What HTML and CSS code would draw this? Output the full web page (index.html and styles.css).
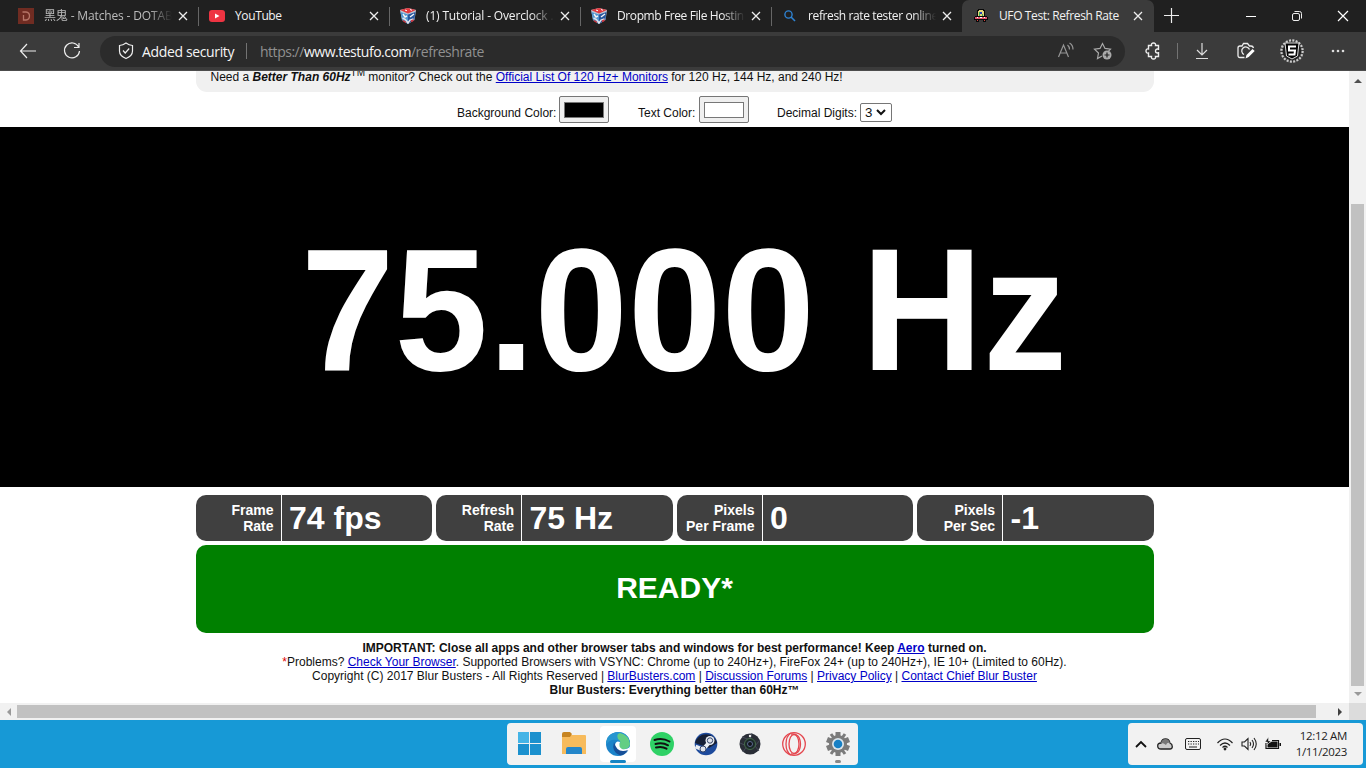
FILE: index.html
```html
<!DOCTYPE html>
<html lang="en">
<head>
<meta charset="utf-8">
<title>UFO Test: Refresh Rate</title>
<link rel="stylesheet" href="styles.css">
</head>
<body>
<svg width="0" height="0" class="defs">
  <symbol id="x" viewBox="0 0 10 10"><path d="M1 1l8 8M9 1L1 9" stroke="#eee" stroke-width="1.3" fill="none"/></symbol>
  <symbol id="cube" viewBox="0 0 16 16"><path d="M0 2L8 0l8 2-1.500 10L8 16l-6-4z" fill="#b9c6d6"/><path d="M0 2L8 0l8 2-8 3.500z" fill="#e23a3f"/><path d="M.5 4L8 6.500V16l-6-4z" fill="#4d94d0"/><path d="M8 6.500L15.500 4l-1.200 8L8 16z" fill="#27579e"/><path d="M3 6l2 3 2-1M10 9l4-3" stroke="#f4f4f6" stroke-width="1.400" fill="none"/><path d="M5 2l2 .8M10 1.500l2 .8" stroke="#fff"/><path d="M2.500 10l3 1.500L8 15l2-3 3.500-1" stroke="#e5e5ea" stroke-width="1.400" fill="none"/><path d="M3 12.500l3 2M11 13.500l2.500-1.500" stroke="#d5363a" stroke-width="1.500" fill="none"/></symbol>
</svg>
<div class="tabs">
  <div class="tab"><svg class="fav" viewBox="0 0 16 16"><path fill="#702c22" d="M0 0h16v16H0z"/><path d="M4.500 4H8q3.500 .5 3.500 4T8 12H5.500V7" stroke="#b77668" stroke-width="1.300" fill="none"/></svg><span class="ttl dim fade">黑鬼 - Matches - DOTAB</span><svg class="close"><use href="#x"/></svg></div>
  <div class="tab"><svg class="fav" viewBox="0 0 16 16"><rect y="2" width="16" height="12" rx="3" fill="#ee3442"/><path d="M6 5.5v5L10.500 8z" fill="#fff"/></svg><span class="ttl">YouTube</span><svg class="close"><use href="#x"/></svg></div>
  <div class="tab"><svg class="fav"><use href="#cube"/></svg><span class="ttl fade t3">(1) Tutorial - Overclock .</span><svg class="close"><use href="#x"/></svg></div>
  <div class="tab"><svg class="fav"><use href="#cube"/></svg><span class="ttl fade t4">Dropmb Free File Hostin</span><svg class="close"><use href="#x"/></svg></div>
  <div class="tab nosep"><svg class="fav" viewBox="0 0 16 16"><circle cx="6.500" cy="6.500" r="3.600" stroke="#2e82d2" stroke-width="1.400" fill="none"/><path d="M9 9l4 4" stroke="#2e82d2" stroke-width="1.600"/></svg><span class="ttl fade t5">refresh rate tester online</span><svg class="close"><use href="#x"/></svg></div>
  <div class="tab active"><svg class="fav" viewBox="0 0 16 16" shape-rendering="crispEdges"><path d="M5 1h6v1h1v6h2v1h1v3h-2v2h-3v-2H6v2H3v-2H1V9h1V8h2V2h1z" fill="#090909"/><path d="M6 2h4v1h1v5H5V3h1z" fill="#e4d47b"/><path d="M6 4h1v4H6zM9 6h1v2H9z" fill="#3fae55"/><path d="M7 4h2v2H7z" fill="#2544ba"/><path d="M2 9h12v2H2z" fill="#e0526a"/><path d="M4 9h1v1H4zM7 9h2v1H7zM11 9h1v1h-1z" fill="#fff"/><path d="M4 12h1v1H4zM11 12h1v1h-1z" fill="#d8423f"/></svg><span class="ttl t6">UFO Test: Refresh Rate</span><svg class="close"><use href="#x"/></svg></div>
  <svg class="plus" viewBox="0 0 15 15"><path d="M7.500 0v15M0 7.500h15" stroke="#eee" stroke-width="1.200"/></svg>
  <div class="winbtns">
    <svg viewBox="0 0 12 12"><path d="M1 6.500h10" stroke="#fff"/></svg>
    <svg viewBox="0 0 12 12" fill="none" stroke="#eee"><rect x="1.500" y="3.500" width="7" height="7" rx="1.500"/><path d="M3.500 1.500h5q2 0 2 2v5"/></svg>
    <svg viewBox="0 0 12 12"><path d="M1 1l10 10M11 1L1 11" stroke="#fff" stroke-width="1.200"/></svg>
  </div>
</div>
<div class="toolbar">
  <svg class="back" viewBox="0 0 18 16"><path d="M17 8H1.500M8 1L1.500 8 8 15" fill="none" stroke="#eee" stroke-width="1.200"/></svg>
  <svg class="reload" viewBox="0 0 18 18"><path d="M15.700 5A7.500 7.500 0 1 0 16.500 9M16 1v4.500h-5" fill="none" stroke="#eee" stroke-width="1.200"/></svg>
  <div class="address">
    <svg class="shield" viewBox="0 0 16 18"><path d="M8 1q3 2.300 6.500 2.500v5.500q0 5-6.500 7.500Q1.500 14 1.500 9V3.500Q5 3.300 8 1zM5 8.500L7.200 11l4-4.500" fill="none" stroke="#eee" stroke-width="1.200"/></svg>
    <span class="sec">Added security</span><i class="vsep"></i>
    <span class="url">https://<b>www.testufo.com</b>/refreshrate</span>
    <svg class="read" viewBox="0 0 18 18" fill="none" stroke="#969696" stroke-width="1.200"><path d="M1.500 15L6.500 3l5 12M3.300 11h6.400M10.500 3q2 1.500 2 4.500M12.500 1q3.500 2 3.500 6.500"/></svg>
    <svg class="star" viewBox="0 0 18 18" fill="none" stroke="#aaa" stroke-width="1.200"><path d="M8 14l-4.500 2.500 1-5.500-4-3.800 5.500-.8L8.500 1.500 11 6.400l5.500.8-2 2"/><circle cx="13" cy="13" r="4.500" fill="#aaa" stroke="none"/><path d="M13 10.500v5M10.500 13h5" stroke="#222"/></svg>
  </div>
  <svg class="puzzle" viewBox="0 0 16 18" fill="none" stroke="#eee" stroke-width="1.400"><path d="M4.500 3.500h2Q6 1 8.500 1t2 2.500h3v3.700q-3-.7-3 1.800t3 1.800v3.700h-3q.5 2.500-2 2.500t-2-2.500h-3V11Q1 11.500 1 9t2.500-2V3.500z"/></svg>
  <i class="vsep v2"></i>
  <svg class="down" viewBox="0 0 14 18" fill="none" stroke="#ddd" stroke-width="1.200"><path d="M7 1v12M2 8l5 5 5-5M1 16.500h12"/></svg>
  <svg class="camera" viewBox="0 0 18 18" fill="none" stroke="#eee" stroke-width="1.300"><path d="M7.500 15.500H3q-2 0-2-2V6q0-2 2-2h2l1.500-2.500h4L12.500 4H14q2 0 2.500 2M7 12.500a4 4 0 1 1 5.500-5"/><path d="M8.500 16.500l1-3.500 6-6 2.200 2-6 6z" fill="#fff" stroke="none"/></svg>
  <svg class="avatar" viewBox="0 0 26 26"><circle cx="13" cy="13" r="10.500" fill="none" stroke="#ccc" stroke-width="2.500" stroke-dasharray="2 1.300"/><circle cx="13" cy="13" r="9.500" fill="#222" stroke="#888" stroke-dasharray="1 2"/><path d="M6 5h14l-1.500 13-5.500 3-5.500-3z" fill="#050505" stroke="#ddd"/><path d="M17 8.500h-7v4h6l-.5 4h-6" fill="none" stroke="#fff" stroke-width="2"/></svg>
  <svg class="more" viewBox="0 0 14 4" fill="#ddd"><circle cx="2" cy="2" r="1.300"/><circle cx="7" cy="2" r="1.300"/><circle cx="12" cy="2" r="1.300"/></svg>
</div>
<div class="middle">
<main class="page">
  <div class="notice"><p>Need a <b><em>Better Than 60Hz</em></b><sup>TM</sup> monitor? Check out the <a>Official List Of 120 Hz+ Monitors</a> for 120 Hz, 144 Hz, and 240 Hz!</p></div>
  <div class="opts"><span class="o1">Background Color:</span><div class="swatch"><i class="black"></i></div><span class="o2">Text Color:</span><div class="swatch"><i></i></div><span class="o3">Decimal Digits:</span><div class="select">3<svg viewBox="0 0 10 7"><path d="M1 1l4 4 4-4" fill="none" stroke="#111" stroke-width="2"/></svg></div></div>
  <div class="hero"><span>75.000 Hz</span></div>
  <div class="stats">
    <div class="stat"><div class="lab">Frame<br>Rate</div><div class="val">74 fps</div></div>
    <div class="stat"><div class="lab">Refresh<br>Rate</div><div class="val">75 Hz</div></div>
    <div class="stat"><div class="lab">Pixels<br>Per Frame</div><div class="val">0</div></div>
    <div class="stat"><div class="lab">Pixels<br>Per Sec</div><div class="val">-1</div></div>
  </div>
  <div class="ready">READY*</div>
  <footer>
    <p><b>IMPORTANT: Close all apps and other browser tabs and windows for best performance! Keep <a>Aero</a> turned on.</b></p>
    <p><span class="red">*</span>Problems? <a>Check Your Browser</a>. Supported Browsers with VSYNC: Chrome (up to 240Hz+), FireFox 24+ (up to 240Hz+), IE 10+ (Limited to 60Hz).</p>
    <p>Copyright (C) 2017 Blur Busters - All Rights Reserved | <a>BlurBusters.com</a> | <a>Discussion Forums</a> | <a>Privacy Policy</a> | <a>Contact Chief Blur Buster</a></p>
    <p><b>Blur Busters: Everything better than 60Hz™</b></p>
  </footer>
</main>
<div class="vscroll"><svg viewBox="0 0 8 5"><path d="M0 5l4-4 4 4z" fill="#505050"/></svg><div class="vthumb"></div><svg viewBox="0 0 8 5"><path d="M0 0l4 4 4-4z" fill="#999"/></svg></div>
</div>
<div class="hscroll"><svg viewBox="0 0 5 8"><path d="M5 0L1 4l4 4z" fill="#999"/></svg><div class="hthumb"></div><svg viewBox="0 0 5 8"><path d="M0 0l4 4-4 4z" fill="#404040"/></svg><i class="corner"></i></div>
<div class="taskbar">
  <div class="dock">
    <div class="app"><svg viewBox="0 0 24 24"><path d="M0 0h11v11H0z" fill="#45b4e6"/><path d="M12 0h11v11H12zM0 12h11v11H0zM12 12h11v11H12z" fill="#1c91ce"/></svg></div>
    <div class="app"><svg viewBox="0 0 24 24"><path d="M0 3h23q1 0 1 1v18H0z" fill="#f7bb5c"/><path d="M0 5V2q0-2 2-2h6l2 2-2 3z" fill="#c78421"/><path d="M4 22v-5q0-2 2-2h12q2 0 2 2v5z" fill="#2486c9"/></svg></div>
    <div class="app cur"><svg viewBox="0 0 24 24"><circle cx="12" cy="12" r="12" fill="#1c83c9"/><path d="M12 0q9 0 12 9 1 9-9 8-4-1-2-4 2-5-3-5Q4 7 0 13 0 1 12 0z" fill="#2795d0"/><path d="M14 1q9 2 10 11-1 6-8 5-4-1-3-4 3-4-1-6-2-5 2-6z" fill="#63ce83"/><path d="M9 13q1-5 5-3-2 5 2 7 4 1 8-2l-1 3q-3 3-7 3-6-1-7-8z" fill="#fff"/><path d="M8 10q-3 10 6 13.500 5-.5 8-5.500-11 4-14-8z" fill="#174f98"/></svg><i></i></div>
    <div class="app"><svg viewBox="0 0 24 24"><circle cx="12" cy="12" r="12" fill="#2fd166"/><path d="M4.500 8q8-2.500 15 1.500M5.500 12q7-2 12.500 1.300M6 15.500q6-1.500 10.500 1.200" fill="none" stroke="#111" stroke-width="2" stroke-linecap="round"/></svg></div>
    <div class="app"><svg viewBox="0 0 24 24"><circle cx="12" cy="12" r="11.300" fill="#1d4a9c"/><path d="M1 11A11.300 11.300 0 0 1 23 11l-8 5z" fill="#151f36"/><path d="M1.500 14.500l7.500 3 7-8" stroke="#e9edf2" stroke-width="4" fill="none"/><circle cx="16" cy="8.500" r="4.500" fill="#e9edf2"/><circle cx="16" cy="8.500" r="2.700" fill="#dfe3ec" stroke="#34466b"/><circle cx="9" cy="17" r="3" fill="#dfe3ec" stroke="#34466b"/></svg></div>
    <div class="app"><svg viewBox="0 0 24 24"><circle cx="12" cy="12" r="10.500" fill="#292d36"/><path d="M4 5l8 3 2-7M22 8l-5 6 4 5M5 20l4-6-7-3" stroke="#454b58" fill="none"/><circle cx="12" cy="12" r="5.500" fill="#1b2928" stroke="#446a4a"/><circle cx="12" cy="12" r="2.500" fill="#101318" stroke="#5b6890"/><circle cx="12" cy="4" r="1.200" fill="#f1f1f1"/></svg></div>
    <div class="app"><svg viewBox="0 0 24 24" fill="none" stroke="#e4474f" stroke-width="1.300"><circle cx="12" cy="12" r="11.300"/><ellipse cx="12" cy="12" rx="5" ry="9.500"/><path d="M9 2q9-1 9.500 10Q18 23 9 22M9 1Q4 4 4 12t5 11"/></svg></div>
    <div class="app"><svg viewBox="0 0 24 24"><path d="M9.500 0h5v24h-5zM0 10l2-5 22 9-2 5zM2 19l-2-5 22-9 2 5z" fill="#7b7b7b"/><path d="M5 2l14 20M19 2L5 22" stroke="#7b7b7b" stroke-width="3"/><circle cx="12" cy="12" r="9" fill="#7b7b7b"/><circle cx="12" cy="12" r="6" fill="#dce5eb"/><circle cx="12" cy="12" r="4.300" fill="#1780c5"/></svg><i class="idle"></i></div>
  </div>
  <div class="tray">
    <svg class="chev" viewBox="0 0 12 8"><path d="M1 7l5-5 5 5" fill="none" stroke="#111" stroke-width="1.800"/></svg>
    <svg class="cloud" viewBox="0 0 16 12"><path d="M4 11Q.7 11 .7 8T4 5Q5 1 8.500 1t4.500 4q2.300 1 2.300 3.500T13 11z" fill="#ccc" stroke="#222" stroke-width="1.300"/><path d="M4 5Q5 1 8.500 1t4.500 4q-3-1-4 2Q7 5 4 5z" fill="#777"/></svg>
    <svg class="kbd" viewBox="0 0 16 12" fill="none" stroke="#222"><rect x=".5" y=".5" width="15" height="11" rx="1.500"/><path d="M3 3.500h11M3 6h11" stroke-dasharray="1.300 1.200"/><path d="M4 9h8"/></svg>
    <svg class="wifi" viewBox="0 0 16 12" fill="none" stroke="#222" stroke-width="1.200"><path d="M.5 5q7.500-8 15 0M3 7.500q5-5 10 0M5.500 9.500q2.500-2.500 5 0"/><circle cx="8" cy="11" r=".8" fill="#222"/></svg>
    <svg class="vol" viewBox="0 0 16 14" fill="none" stroke="#222" stroke-width="1.100"><path d="M1 5h2.500L7 1.500v11L3.500 9H1zM9 5q1.500 2 0 4M11 3q3 4 0 8M13 1q4.500 6 0 12"/></svg>
    <svg class="bat" viewBox="0 0 16 12"><path d="M1 5v5.500h12.500V2.500H7" fill="none" stroke="#111" stroke-width="1.200"/><path d="M2.500 6L7 3.500h5.500v6h-10z" fill="#111"/><path d="M14.500 5H16v3h-1.500z" fill="#111"/><path d="M3.500-1L0 4h2.500L2 7l4-4H3.500z" fill="#111" stroke="#f2f2f2" stroke-width=".5"/></svg>
    <div class="clock">12:12 AM<br>1/11/2023</div>
  </div>
</div>
</body>
</html>
```
FILE: styles.css
```css
* { box-sizing: border-box; }
body { margin: 0; width: 1366px; height: 768px; overflow: hidden; display: flex; flex-direction: column; background: #fff; font-family: "Liberation Sans", sans-serif; }
svg { display: block; flex: none; overflow: visible; }
.defs { position: absolute; }
p { margin: 0; }
.tabs { height: 32px; flex: none; background: #202020; display: flex; padding-left: 7px; font: 12px "Open Sans", "Noto Sans CJK SC", sans-serif; color: #f2f2f2; }
.tab { width: 191px; height: 32px; flex: none; display: flex; align-items: center; padding-left: 11px; position: relative; }
.tab::after { content: ""; position: absolute; right: -1px; top: 7px; width: 1px; height: 19px; background: #666; }
.tab.nosep::after, .tab.active::after { display: none; }
.tab.active { width: 192px; background: #3b3b3b; border-radius: 7px 7px 0 0; }
.fav { width: 16px; height: 16px; margin-right: 10px; }
.ttl { width: 128px; white-space: nowrap; line-height: 20px; letter-spacing: -.38px; }
.t3 { letter-spacing: -.16px; }
.t4 { letter-spacing: -.4px; }
.dim { color: #bcbcbc; letter-spacing: -.15px; }
.fade { -webkit-mask-image: linear-gradient(90deg, #000 82%, transparent); mask-image: linear-gradient(90deg, #000 82%, transparent); }
.close { width: 10px; height: 10px; margin-left: 6px; }
.plus { width: 15px; height: 15px; margin: 8px 0 0 10px; }
.winbtns { display: flex; gap: 34px; margin-left: auto; padding: 10px 17px 0 0; }
.winbtns svg { width: 12px; height: 12px; }
.toolbar { height: 39px; flex: none; background: #3b3b3b; border-bottom: 1px solid #4c4c4c; display: flex; align-items: center; }
.back { width: 18px; height: 16px; margin-left: 19px; }
.reload { width: 18px; height: 18px; margin-left: 26px; }
.address { margin-left: 19px; width: 1025px; height: 31px; border-radius: 16px; background: #2b2b2b; display: flex; align-items: center; padding-left: 18px; font: 14px "Open Sans", sans-serif; color: #f5f5f5; }
.shield { width: 16px; height: 18px; margin-right: 8px; }
.sec { width: 93px; white-space: nowrap; letter-spacing: -.36px; }
.vsep { width: 1px; height: 16px; background: #737373; margin-left: 11px; flex: none; }
.url { color: #909090; margin-left: 13px; letter-spacing: -.48px; }
.url b { color: #f5f5f5; font-weight: 400; }
.read { width: 18px; height: 18px; margin-left: auto; }
.star { width: 18px; height: 18px; margin: 0 13px 0 19px; }
.puzzle { width: 16px; height: 18px; margin-left: 20px; }
.v2 { margin-left: 16px; }
.down { width: 14px; height: 18px; margin-left: 17px; }
.camera { width: 18px; height: 18px; margin-left: 28px; }
.avatar { width: 26px; height: 26px; margin-left: 24px; }
.more { width: 14px; height: 4px; margin-left: 26px; }
.middle { height: 632px; flex: none; display: flex; }
.page { width: 1349px; overflow: hidden; display: flex; flex-direction: column; align-items: center; font-size: 12px; color: #111; }
a { color: #0000c8; text-decoration: underline; }
.notice { width: 958px; height: 21px; flex: none; background: #f0f0f0; border-radius: 0 0 11px 11px; padding-left: 15px; line-height: 14px; }
.notice p { margin-top: -1px; white-space: nowrap; }
.notice sup { font-size: 10px; line-height: 0; }
.opts { width: 435px; height: 35px; flex: none; display: flex; align-items: flex-start; padding-top: 4px; white-space: nowrap; }
.opts span { line-height: 14px; margin-top: 10px; flex: none; }
.o1 { width: 102px; } .o2 { width: 61px; margin-left: 29px; } .o3 { width: 83px; margin-left: 28px; }
.swatch { width: 50px; height: 27px; flex: none; border: 1px solid #767676; border-radius: 2px; background: #efefef; padding: 5px 4px; }
.swatch i { display: block; height: 16px; border: 1px solid #777; background: #fff; }
.swatch i.black { background: #000; }
.select { width: 32px; height: 19px; margin-top: 7px; border: 1px solid #767676; border-radius: 2px; display: flex; align-items: center; padding-left: 4px; font-size: 13.300px; flex: none; }
.select svg { width: 10px; height: 7px; margin-left: 4px; }
.hero { width: 1349px; height: 360px; flex: none; background: #000; color: #fff; display: flex; align-items: center; justify-content: center; font-size: 168px; font-weight: 700; line-height: 1; white-space: nowrap; padding: 5px 0 0 19px; }
.hero span { display: block; transform: scaleY(1.042); }
.stats { width: 958px; margin-top: 8px; display: grid; grid-template-columns: repeat(4, 1fr); gap: 4px; }
.stat { height: 46px; background: #404040; color: #fff; border-radius: 10px; display: flex; align-items: center; font-weight: 700; }
.lab { width: 86px; height: 46px; flex: none; border-right: 1px solid #fff; text-align: right; padding: 7px 7px 0 0; font-size: 14px; line-height: 16px; }
.val { font-size: 32px; padding-left: 7.500px; line-height: 46px; }
.ready { width: 958px; height: 88px; flex: none; margin-top: 4px; background: #008000; border-radius: 10px; color: #fff; font-size: 30px; font-weight: 700; text-align: center; line-height: 86px; }
footer { margin-top: 8px; text-align: center; line-height: 14px; white-space: nowrap; }
.red { color: #e00000; }
.vscroll { width: 17px; background: #f1f1f1; display: flex; flex-direction: column; align-items: center; padding-top: 7px; }
.vscroll svg { width: 8px; height: 5px; }
.vthumb { width: 13px; height: 482px; margin: 121px 0 6px; background: #c1c1c1; }
.hscroll { height: 17px; flex: none; background: #f1f1f1; display: flex; align-items: center; padding-left: 6px; }
.hscroll svg { width: 5px; height: 8px; }
.hthumb { width: 1299px; height: 13px; margin: 0 22px 0 6px; background: #c1c1c1; }
.corner { width: 17px; height: 17px; margin-left: auto; background: #dcdcdc; }
.taskbar { height: 48px; flex: none; background: #1799d6; display: flex; padding: 3px 3px 3px 507px; }
.dock { width: 351px; height: 42px; background: #f2f2f2; border-radius: 4px; display: flex; padding-left: 1px; flex: none; }
.app { width: 44px; flex: none; height: 42px; display: flex; flex-direction: column; align-items: center; padding-top: 9px; position: relative; }
.app svg { width: 24px; height: 24px; }
.app.cur::before { content: ""; position: absolute; inset: 3px 4px; background: #fff; border-radius: 4px; z-index: 0; }
.app.cur svg, .app i { position: relative; }
.app i { width: 16px; height: 3px; margin-top: 4px; border-radius: 2px; background: #1685c4; }
.app i.idle { width: 6px; background: #888; }
.tray { margin-left: auto; width: 235px; height: 42px; background: #f2f2f2; border-radius: 4px; display: flex; align-items: center; padding: 0 16px 0 7px; }
.chev { width: 12px; height: 8px; }
.cloud { width: 16px; height: 12px; margin-left: 10px; }
.kbd { width: 16px; height: 12px; margin-left: 12px; }
.wifi { width: 16px; height: 12px; margin-left: 16px; }
.vol { width: 16px; height: 14px; margin-left: 8px; }
.bat { width: 16px; height: 12px; margin-left: 8px; }
.clock { margin-left: auto; text-align: right; font: 11.500px/16px "Open Sans", sans-serif; color: #222; letter-spacing: -.35px; white-space: nowrap; }
```
